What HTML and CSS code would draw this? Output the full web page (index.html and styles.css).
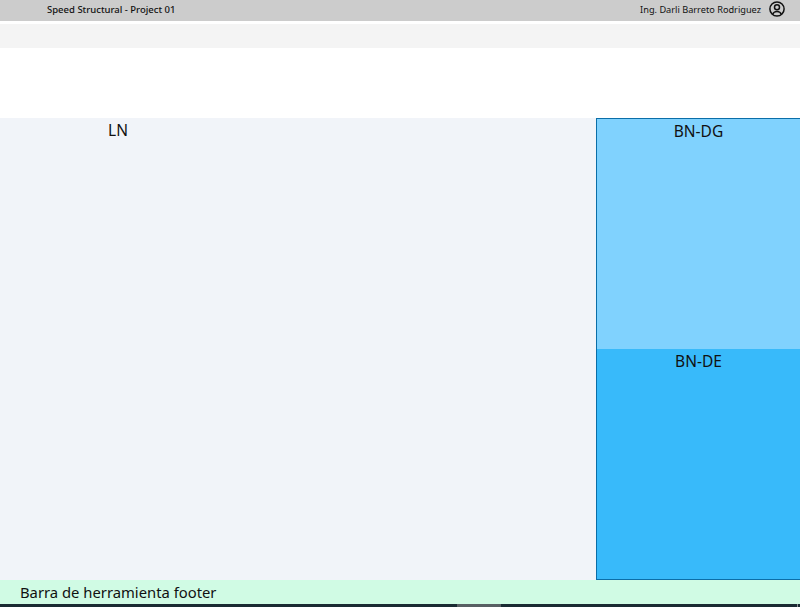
FILE: index.html
```html
<!DOCTYPE html>
<html lang="es">
<head>
<meta charset="utf-8">
<title>Speed Structural - Project 01</title>
<link rel="stylesheet" href="styles.css">
</head>
<body>
<div class="app">
  <header class="titlebar">
    <span class="title">Speed Structural - Project 01</span>
    <div class="user">
      <span class="user-name">Ing. Darli Barreto Rodriguez</span>
      <svg class="user-icon" viewBox="0 0 16 16" width="16" height="16" aria-hidden="true">
        <circle cx="8" cy="8" r="7.1" fill="none" stroke="#111" stroke-width="1.5"/>
        <circle cx="8" cy="6.2" r="2.5" fill="none" stroke="#111" stroke-width="1.5"/>
        <path d="M3.6 13.4c.7-2 2.300-3 4.400-3s3.700 1 4.400 3" fill="none" stroke="#111" stroke-width="1.5"/>
      </svg>
    </div>
  </header>
  <div class="toolbar"></div>
  <div class="ribbon"></div>
  <main class="workspace">
    <section class="ln">LN</section>
    <aside class="bn">
      <div class="bn-dg">BN-DG</div>
      <div class="bn-de">BN-DE</div>
    </aside>
  </main>
  <footer class="footer">Barra de herramienta footer</footer>
  <div class="taskstrip"><span class="thumb"></span><span class="tick"></span></div>
</div>
</body>
</html>
```
FILE: styles.css
```css
* { box-sizing: border-box; }
html, body { margin: 0; height: 100%; overflow: hidden; }
body { font-family: "Noto Sans", "Open Sans", "Liberation Sans", sans-serif; color: #111; background: #fff; }
.app { display: flex; flex-direction: column; height: 607px; }
.titlebar { flex: 0 0 21px; background: #cccccc; display: flex; align-items: center; justify-content: space-between; padding: 0 15px 3px 47px; }
.title { font-weight: 500; font-size: 9.5px; }
.user { display: flex; align-items: center; gap: 8px; }
.user-name { font-size: 9.2px; }
.user-icon { display: block; }
.toolbar { flex: 0 0 24px; margin-top: 3px; background: #f4f4f4; }
.ribbon { flex: 0 0 70px; background: #fff; }
.workspace { flex: 1; display: flex; min-height: 0; }
.ln { flex: 0 0 596px; background: #f1f4f9; font-size: 15.5px; line-height: 20px; padding: 2px 360px 0 0; text-align: center; }
.bn { flex: 1; display: flex; flex-direction: column; border: 1px solid #0b6ea8; border-right: 0; }
.bn-dg, .bn-de { text-align: center; font-size: 15.5px; line-height: 20px; }
.bn-dg { flex: 0 0 230px; background: #80d2fe; padding-top: 2px; }
.bn-de { flex: 1; background: #38bafa; padding-top: 2px; }
.footer { flex: 0 0 24px; background: #d0fbe4; font-size: 14.8px; line-height: 24px; padding-left: 20px; }
.taskstrip { flex: 0 0 3px; background: #1a2b33; display: flex; }
.thumb { width: 44px; margin-left: 457px; background: #585f63; }
.tick { width: 1px; margin-left: 296px; background: #8a8f92; }
```
